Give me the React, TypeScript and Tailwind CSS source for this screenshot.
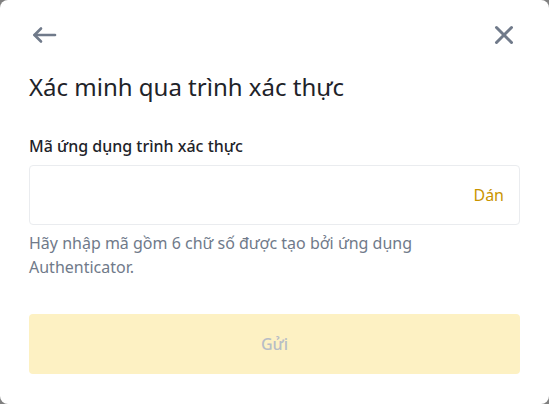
import { useState } from "react";

export default function App() {
  const [code, setCode] = useState("");

  return (
    <div className="h-screen w-full bg-[#808080]">
      <div
        className="flex h-full w-full flex-col rounded-lg bg-white px-[29px] pt-[21px]"
        style={{ fontFamily: '"Noto Sans", "Inter", sans-serif' }}
      >
        {/* Header icons */}
        <div className="flex h-7 items-center justify-between">
          <button className="flex h-7 w-7 items-center justify-center text-[#707a8a]">
            <svg viewBox="0 0 28 28" className="h-7 w-7" fill="none" stroke="currentColor" strokeWidth="2.6" strokeLinecap="round" strokeLinejoin="round">
              <path d="M26 14H5.5" />
              <path d="M12 7.5L5.5 14l6.5 6.5" />
            </svg>
          </button>
          <button className="mr-1 flex h-6 w-6 items-center justify-center text-[#707a8a]">
            <svg viewBox="0 0 24 24" className="h-6 w-6" fill="none" stroke="currentColor" strokeWidth="3" strokeLinecap="round">
              <path d="M4.5 4.5l15 15" />
              <path d="M19.5 4.5l-15 15" />
            </svg>
          </button>
        </div>

        {/* Title */}
        <h1 className="mt-[22px] text-[24px] leading-[32px] text-[#1e2329]">
          Xác minh qua trình xác thực
        </h1>

        {/* Field */}
        <label className="mt-[31px] text-[16px] font-medium leading-[24px] text-[#1e2329]">
          Mã ứng dụng trình xác thực
        </label>
        <div className="mt-[7px] flex h-[60px] items-center rounded border border-[#eaecef] pr-[15px] pl-[12px]">
          <input
            className="h-full flex-1 bg-transparent text-[16px] text-[#1e2329] outline-none"
            value={code}
            onChange={(e) => setCode(e.target.value)}
          />
          <button className="text-[16px] text-[#c99400]">Dán</button>
        </div>
        <p className="mt-[6px] text-[16px] leading-[24px] text-[#707a8a]">
          Hãy nhập mã gồm 6 chữ số được tạo bởi ứng dụng
          <br />
          Authenticator.
        </p>

        {/* Submit */}
        <button
          disabled
          className="mt-[35px] h-[60px] w-full rounded bg-[#fdf1c3] text-[16px] font-medium text-[#b7bdc6]"
        >
          Gửi
        </button>
      </div>
    </div>
  );
}
